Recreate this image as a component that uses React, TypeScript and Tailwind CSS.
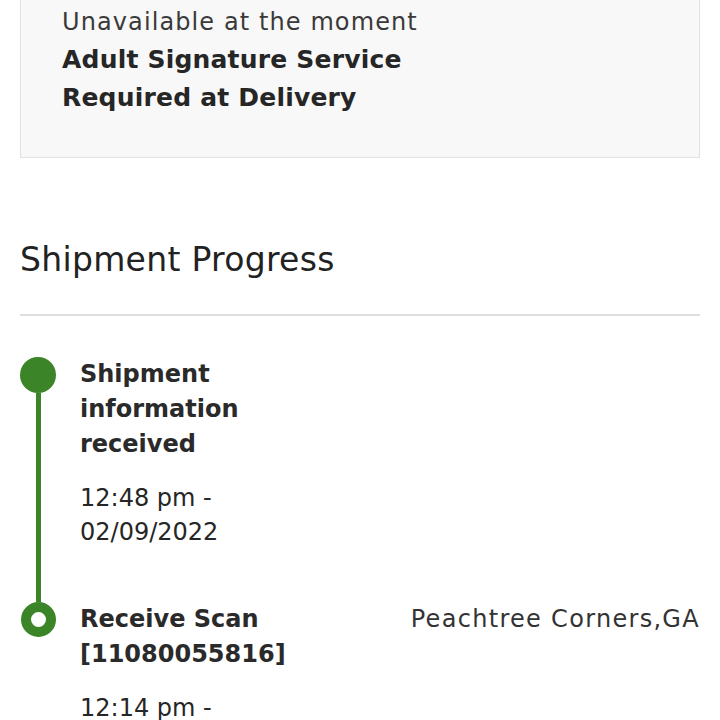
import React from "react";

interface ProgressEvent {
  title: string[];
  time: string[];
  location?: string;
  current?: boolean;
}

const events: ProgressEvent[] = [
  {
    title: ["Shipment", "information", "received"],
    time: ["12:48 pm -", "02/09/2022"],
  },
  {
    title: ["Receive Scan", "[11080055816]"],
    time: ["12:14 pm -", "02/10/2022"],
    location: "Peachtree Corners,GA",
    current: true,
  },
];

export default function App() {
  return (
    <div
      className="h-[720px] overflow-hidden bg-white text-[#262626]"
      style={{ fontFamily: '"DejaVu Sans", "Open Sans", sans-serif' }}
    >
      {/* Signature options box */}
      <div className="mx-5 border-x border-b border-[#e2e2e2] bg-[#f8f8f8] pl-[41px] pt-[3px] pb-[40px]">
        <div className="text-[24px] leading-[38px] tracking-[1.1px] text-[#3a3a3a]">Unavailable at the moment</div>
        <div className="text-[25px] leading-[38px] font-semibold tracking-[0.2px]">Adult Signature Service</div>
        <div className="text-[25px] leading-[38px] font-semibold tracking-[0.2px]">Required at Delivery</div>
      </div>

      {/* Shipment progress */}
      <div className="mx-5 mt-[82px]">
        <h2 className="text-[33px] leading-[40px] font-medium tracking-[0.3px] text-[#222]">Shipment Progress</h2>
        <div className="mt-[34px] h-[2px] bg-[#dedede]" />

        <div className="mt-[41px]">
          {events.map((ev, i) => (
            <div key={i} className="flex">
              <div className="flex w-[36px] flex-col items-center">
                {ev.current ? (
                  <div className="h-[35px] w-[35px] shrink-0 rounded-full border-[10px] border-[#3b8427] bg-white" />
                ) : (
                  <div className="h-[36px] w-[36px] shrink-0 rounded-full bg-[#3b8427]" />
                )}
                {i < events.length - 1 && <div className="w-[5px] flex-1 bg-[#3b8427]" />}
              </div>
              <div className="ml-6 flex flex-1 justify-between pb-[53px]">
                <div className="w-[240px]">
                  <div className="text-[24px] leading-[35px] font-semibold text-[#2a2a2a]">
                    {ev.title.map((t) => (
                      <div key={t}>{t}</div>
                    ))}
                  </div>
                  <div className="mt-[19px] text-[24px] leading-[34px]">
                    {ev.time.map((t) => (
                      <div key={t}>{t}</div>
                    ))}
                  </div>
                </div>
                {ev.location && (
                  <div className="text-[24px] leading-[35px] tracking-[1.3px] text-[#333]">{ev.location}</div>
                )}
              </div>
            </div>
          ))}
        </div>
      </div>
    </div>
  );
}
